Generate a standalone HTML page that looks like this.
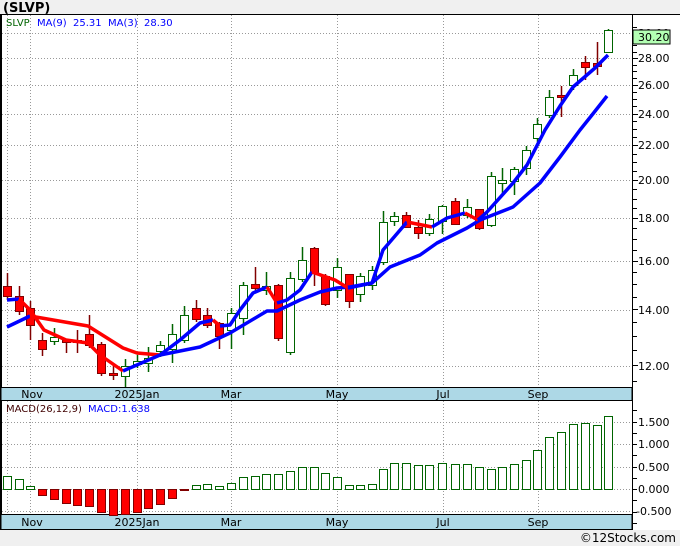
<!DOCTYPE html>
<html><head><meta charset="utf-8"><style>
html,body{margin:0;padding:0;background:#f0f0f0;}
svg{display:block;font-family:"DejaVu Sans","Liberation Sans",sans-serif;}
</style></head><body>
<svg id="s" width="680" height="546" xmlns="http://www.w3.org/2000/svg">
<rect x="0" y="0" width="680" height="546" fill="#f0f0f0"/>
<rect x="1" y="14" width="679" height="516" fill="#fff"/>
<text x="3" y="12" font-size="13" font-weight="bold" fill="#000">(SLVP)</text>
<g id="grid" stroke="#999" stroke-dasharray="1,2" stroke-width="1"></g>
<!-- borders -->
<line x1="0" y1="14.5" x2="680" y2="14.5" stroke="#000"/>
<line x1="1" y1="14" x2="1" y2="530" stroke="#000" stroke-width="2"/>
<line x1="632.5" y1="14" x2="632.5" y2="530" stroke="#000"/>
<rect x="1" y="387.5" width="631" height="13" fill="#add8e6" stroke="#000"/>
<rect x="1" y="514.5" width="631" height="15" fill="#add8e6" stroke="#000"/>
<g font-size="11" fill="#000" text-anchor="middle">
<text x="32" y="398">Nov</text><text x="137" y="398">2025Jan</text><text x="231" y="398">Mar</text><text x="337" y="398">May</text><text x="443" y="398">Jul</text><text x="538" y="398">Sep</text>
<text x="32" y="526">Nov</text><text x="137" y="526">2025Jan</text><text x="231" y="526">Mar</text><text x="337" y="526">May</text><text x="443" y="526">Jul</text><text x="538" y="526">Sep</text>
</g>
<g font-size="10">
<text x="6" y="26" fill="#006400">SLVP</text>
<text x="37" y="26" fill="#0000ff">MA(9)</text><text x="73" y="26" fill="#0000ff">25.31</text>
<text x="108" y="26" fill="#0000ff">MA(3)</text><text x="144" y="26" fill="#0000ff">28.30</text>
<text x="6" y="412" fill="#400000">MACD(26,12,9)</text>
<text x="88" y="412" fill="#0000ff">MACD:1.638</text>
</g>
<g id="ticks" stroke="#000"></g>
<g font-size="11" fill="#000">
<text x="638" y="37">30.00</text>
<text x="638" y="62">28.00</text><text x="638" y="89">26.00</text><text x="638" y="118">24.00</text><text x="638" y="149">22.00</text><text x="638" y="184">20.00</text><text x="638" y="222">18.00</text><text x="638" y="265">16.00</text><text x="638" y="314">14.00</text><text x="638" y="370">12.00</text>
<text x="638" y="426">1.500</text><text x="638" y="448">1.000</text><text x="638" y="471">0.500</text><text x="638" y="493">0.000</text><text x="636" y="515">-0.500</text>
</g>
<rect x="633" y="30" width="37" height="14" fill="#b3ffb3" stroke="#000"/>
<text x="638" y="41" font-size="11" fill="#000">30.20</text>
<g id="macd"></g>
<g id="cand"></g>
<polyline fill="none" stroke="#0000ff" stroke-width="3.5" stroke-linejoin="round" points="7,327 30,316"/>
<polyline fill="none" stroke="#ff0000" stroke-width="3.5" stroke-linejoin="round" points="30,316 88,326 123,348 137,353 160,355"/>
<polyline fill="none" stroke="#0000ff" stroke-width="3.5" stroke-linejoin="round" points="160,355 200,347 230,333 267,311 277,311 300,300 320,292 337,288 350,287 372,283 390,267 420,255 437,243 467,228 480,220 513,207 540,183 560,157 580,130 592,115 607,96"/>
<polyline fill="none" stroke="#0000ff" stroke-width="3.5" stroke-linejoin="round" points="7,300 19,299"/>
<polyline fill="none" stroke="#ff0000" stroke-width="3.5" stroke-linejoin="round" points="19,299 30,310 44,330 66,340 88,343 100,355 123,371"/>
<polyline fill="none" stroke="#0000ff" stroke-width="3.5" stroke-linejoin="round" points="123,371 160,355 180,340 200,323 213,320"/>
<polyline fill="none" stroke="#ff0000" stroke-width="3.5" stroke-linejoin="round" points="213,320 220,326"/>
<polyline fill="none" stroke="#0000ff" stroke-width="3.5" stroke-linejoin="round" points="220,326 230,325 240,310 253,293 267,287"/>
<polyline fill="none" stroke="#ff0000" stroke-width="3.5" stroke-linejoin="round" points="267,287 277,303"/>
<polyline fill="none" stroke="#0000ff" stroke-width="3.5" stroke-linejoin="round" points="277,303 287,300 300,290 312,272"/>
<polyline fill="none" stroke="#ff0000" stroke-width="3.5" stroke-linejoin="round" points="312,272 335,280 348,288"/>
<polyline fill="none" stroke="#0000ff" stroke-width="3.5" stroke-linejoin="round" points="348,288 372,283 383,250 407,222"/>
<polyline fill="none" stroke="#ff0000" stroke-width="3.5" stroke-linejoin="round" points="407,222 432,227"/>
<polyline fill="none" stroke="#0000ff" stroke-width="3.5" stroke-linejoin="round" points="432,227 447,218 465,213"/>
<polyline fill="none" stroke="#ff0000" stroke-width="3.5" stroke-linejoin="round" points="465,213 478,220"/>
<polyline fill="none" stroke="#0000ff" stroke-width="3.5" stroke-linejoin="round" points="478,220 487,212 513,183 527,165 545,130 560,106 573,87 595,68 608,55"/>
<text x="676" y="542" font-size="12" fill="#000" text-anchor="end">©12Stocks.com</text>
</svg>
<script>
var NS="http://www.w3.org/2000/svg";
function el(p,t,a){var e=document.createElementNS(NS,t);for(var k in a)e.setAttribute(k,a[k]);document.getElementById(p).appendChild(e);}
// grid
[7,30,137,231,337,443,538].forEach(function(x){el("grid","line",{x1:x+.5,y1:15,x2:x+.5,y2:387});el("grid","line",{x1:x+.5,y1:401,x2:x+.5,y2:514});});
[33,58,85,114,145,180,218,261,310,366,422,444,467,489,511].forEach(function(y){el("grid","line",{x1:2,y1:y+.5,x2:632,y2:y+.5});});
// ticks
function L(p){return 1265.9-362.5*Math.log(p);}
for(var p=11.5;p<=30.5;p+=0.5){var y=Math.round(L(p))+.5;el("ticks","line",{x1:632,y1:y,x2:(p%2==0?638:637),y2:y});}
for(var m=-0.75;m<=1.8;m+=0.25){var y=Math.round(489-45*m)+.5;el("ticks","line",{x1:632,y1:y,x2:637,y2:y});}
// candles x,wt,wb,bt,bb,c
var C=[[7,273,300,286,296,'r'],[19,286,315,296,311,'r'],[30,301,340,308,325,'r'],[42,333,356,340,349,'r'],[54,328,345,337,341,'g'],[66,339,353,340,342,'r'],[77,330,353,340,342,'r'],[89,315,348,334,345,'r'],[101,342,376,344,373,'r'],[113,364,380,373,375,'r'],[125,359,387,366,376,'g'],[137,355,368,361,364,'g'],[148,347,372,358,363,'g'],[160,341,357,345,351,'g'],[172,324,363,334,349,'g'],[184,306,343,315,340,'g'],[196,300,322,308,319,'r'],[207,308,328,315,325,'r'],[219,322,349,323,336,'r'],[231,308,349,313,330,'g'],[243,282,335,285,318,'g'],[255,267,291,284,288,'r'],[266,272,295,286,290,'g'],[278,284,341,285,338,'r'],[290,272,355,278,352,'g'],[302,247,282,260,279,'g'],[314,247,286,248,273,'r'],[325,274,306,276,304,'r'],[337,258,298,267,290,'g'],[349,274,308,274,301,'r'],[360,273,302,276,294,'g'],[372,266,290,270,285,'g'],[383,211,265,222,262,'g'],[394,212,226,216,221,'g'],[406,212,228,215,227,'r'],[418,220,239,227,233,'r'],[429,214,236,219,233,'g'],[442,205,234,206,221,'g'],[455,198,225,201,224,'r'],[467,199,218,207,215,'g'],[479,209,230,209,228,'r'],[491,172,227,176,225,'g'],[502,168,194,180,183,'g'],[514,167,195,169,181,'g'],[526,146,175,150,168,'g'],[537,118,142,124,138,'g'],[549,90,118,97,115,'g'],[561,86,117,95,97,'r'],[573,69,90,75,85,'g'],[585,56,80,62,67,'r'],[597,42,75,63,66,'r'],[608,29,52,30,52,'g']];
C.forEach(function(c){var col=c[5]=='g'?'#006400':'#800000';
el("cand","line",{x1:c[0]+.5,y1:c[1],x2:c[0]+.5,y2:c[2],stroke:col,"stroke-width":1.5});
el("cand","rect",{x:c[0]-3.5,y:c[3]+.5,width:8,height:Math.max(1,c[4]-c[3]),fill:c[5]=='g'?'#fff':'#ff0000',stroke:col,"stroke-width":1});});
// macd
var M=[476,479,486,495,499,503,505,506,512,515,514,512,508,504,498,490,485,484,486,483,477,476,474,474,471,467,467,473,477,485,485,484,469,463,463,465,465,463,464,464,467,469,467,464,460,450,437,432,424,423,425,416];
M.forEach(function(y,i){var x=C[i][0];if(y<489)el("macd","rect",{x:x-3.5,y:y+.5,width:8,height:489-y,fill:'#fff',stroke:'#006400'});else el("macd","rect",{x:x-3.5,y:489.5,width:8,height:Math.max(1,y-489),fill:'#ff0000',stroke:'#800000'});});
</script>
</body></html>
